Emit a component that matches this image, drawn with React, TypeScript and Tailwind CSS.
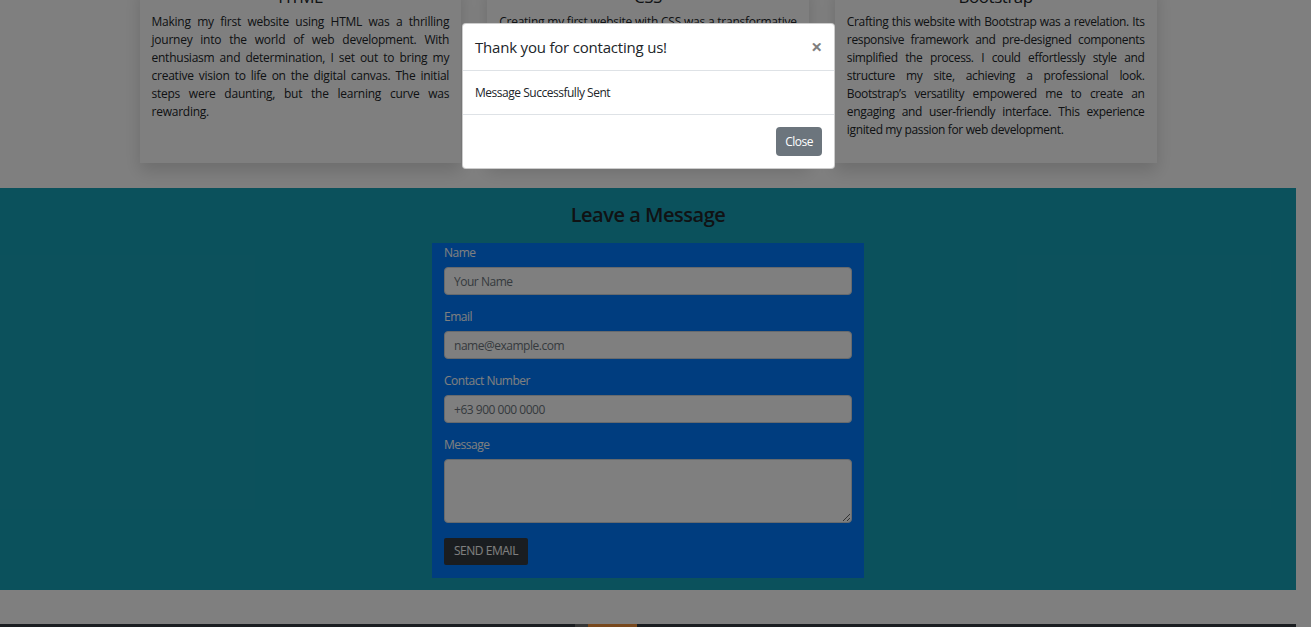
import { FC } from 'react';

const cards = [
    {
        title: 'HTML',
        tracking: 'tracking-[-0.02em]',
        body: 'Making my first website using HTML was a thrilling journey into the world of web development. With enthusiasm and determination, I set out to bring my creative vision to life on the digital canvas. The initial steps were daunting, but the learning curve was rewarding.',
    },
    {
        title: 'CSS',
        tracking: 'tracking-[-0.02em]',
        body: 'Creating my first website with CSS was a transformative experience. Styling each element taught me the power of design, and seeing my layouts come together brought a real sense of accomplishment.',
    },
    {
        title: 'Bootstrap',
        tracking: 'tracking-[-0.03em]',
        body: 'Crafting this website with Bootstrap was a revelation. Its responsive framework and pre-designed components simplified the process. I could effortlessly style and structure my site, achieving a professional look. Bootstrap\u2019s versatility empowered me to create an engaging and user-friendly interface. This experience ignited my passion for web development.',
    },
];

const fields = [
    { label: 'Name', placeholder: 'Your Name' },
    { label: 'Email', placeholder: 'name@example.com' },
    { label: 'Contact Number', placeholder: '+63 900 000 0000' },
];

const font = { fontFamily: '"Open Sans", "Noto Sans", sans-serif' };

const App: FC = () => {
    return (
        <div className="relative h-[627px] w-[1311px] overflow-hidden bg-white tracking-[-0.03em]" style={font}>
            <div className="w-[1296px]">
                {/* cards (page is scrolled, titles are cut off) */}
                <div className="mx-auto -mt-[15px] flex w-[1017px] gap-[26px] pb-[25px]">
                    {cards.map((c) => (
                        <div
                            key={c.title}
                            className="flex-1 bg-white px-3 pb-6 shadow-[0_8px_16px_rgba(0,0,0,0.15)]"
                        >
                            <h5 className="text-center text-[17px] leading-[24px] font-medium text-[#212529]">
                                {c.title}
                            </h5>
                            <p className={`mt-[4px] text-justify text-[12px] leading-[18px] text-[#212529] ${c.tracking}`}>
                                {c.body}
                            </p>
                        </div>
                    ))}
                </div>

                {/* contact section */}
                <section className="bg-[#17a2b8] pt-[14px] pb-[12px]">
                    <h2 className="text-center text-[20px] leading-[26px] font-semibold text-[#212529]">
                        Leave a Message
                    </h2>
                    <form className="mx-auto mt-[15px] w-[432px] bg-[#007bff] px-3 pt-px pb-[13px]">
                        {fields.map((f) => (
                            <div key={f.label} className="mb-[13px]">
                                <label className="mb-[5px] block text-[12px] leading-[18px] text-white">
                                    {f.label}
                                </label>
                                <input
                                    placeholder={f.placeholder}
                                    className="block h-[28px] w-full rounded-[4px] border border-[#ced4da] bg-white px-[9px] text-[12px] text-[#495057] outline-none placeholder:text-[#6c757d]"
                                />
                            </div>
                        ))}
                        <div className="mb-[14px]">
                            <label className="mb-[5px] block text-[12px] leading-[18px] text-white">
                                Message
                            </label>
                            <textarea className="block h-[64px] w-full rounded-[4px] border border-[#ced4da] bg-white px-[9px] text-[12px] outline-none" />
                        </div>
                        <button
                            type="button"
                            className="h-[27px] rounded-[2px] bg-[#343a40] px-[10px] text-[12px] text-white uppercase"
                        >
                            Send Email
                        </button>
                    </form>
                </section>

                <div className="h-[34px]" />
                <div className="flex h-[10px] bg-[#343a40]">
                    <div className="ml-[575px] w-[13px] bg-[#6c6c6c]" />
                    <div className="w-[49px] bg-[#f0913a]" />
                </div>
            </div>

            {/* modal backdrop */}
            <div className="absolute inset-0 bg-black/50" />

            {/* modal */}
            <div className="absolute top-[23px] left-[462px] w-[373px] rounded-[4px] border border-black/20 bg-white">
                <div className="flex h-[47px] items-center justify-between border-b border-[#dee2e6] px-3">
                    <h5 className="text-[15px] font-medium tracking-[-0.2px] text-[#212529]">
                        Thank you for contacting us!
                    </h5>
                    <button type="button" className="text-[20px] leading-none font-bold text-black/50">
                        ×
                    </button>
                </div>
                <div className="flex h-[43px] items-center px-3 text-[12px] text-[#212529]">
                    Message Successfully Sent
                </div>
                <div className="flex justify-end border-t border-[#dee2e6] p-3">
                    <button
                        type="button"
                        className="h-[29px] rounded-[4px] bg-[#6c757d] px-[9px] text-[12px] text-white"
                    >
                        Close
                    </button>
                </div>
            </div>
        </div>
    );
};

export default App;
